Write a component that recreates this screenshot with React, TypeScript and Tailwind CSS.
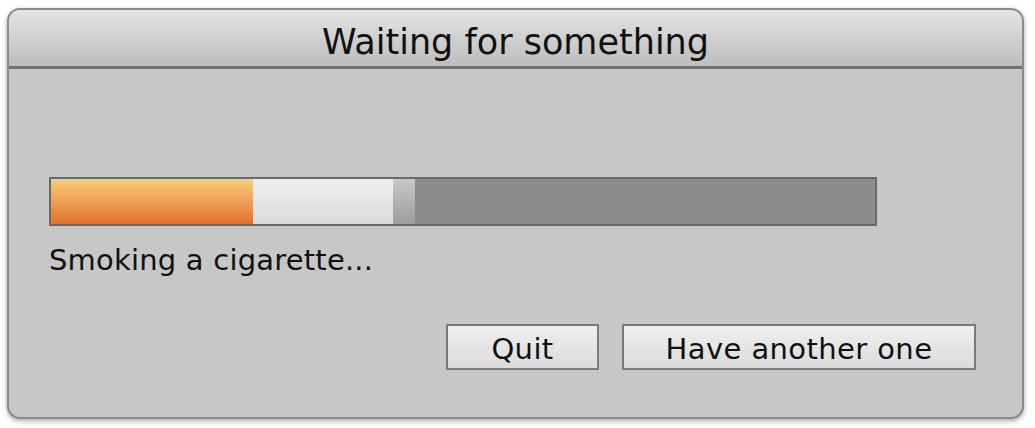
export default function App() {
  const font = { fontFamily: '"DejaVu Sans", Verdana, sans-serif' };

  return (
    <div className="w-[1035px] h-[428px] bg-white pt-[8px] pl-[7px]" style={font}>
      {/* Dialog window */}
      <div className="w-[1017px] h-[411px] rounded-[13px] border-2 border-[#8a8a8a] bg-[#c8c7c8] overflow-hidden shadow-[0_2px_5px_rgba(0,0,0,0.35)] flex flex-col">
        {/* Title bar */}
        <div className="h-[59px] bg-gradient-to-b from-[#e4e4e4] to-[#bdbdbd] border-b-[3px] border-[#707070] flex justify-center pt-[15px]">
          <span className="text-[35px] text-[#111] leading-none">Waiting for something</span>
        </div>

        {/* Body */}
        <div className="flex-1 pl-[40px] pr-[46px] pt-[108px]">
          <div className="w-[828px] h-[49px] border-2 border-[#6a6a6a] flex">
            <div className="w-[202px] bg-gradient-to-b from-[#fdcd74] via-[#eea05a] to-[#e06f28]" />
            <div className="w-[140px] bg-gradient-to-b from-[#f0efee] to-[#dedbdb]" />
            <div className="w-[22px] bg-gradient-to-b from-[#c8c8ca] to-[#9d9d9f]" />
            <div className="flex-1 bg-[#8e8c8e]" />
          </div>
          <div className="mt-[20px] text-[29px] text-[#111] leading-none tracking-[0.2px]">Smoking a cigarette...</div>

          <div className="mt-[49px] flex justify-end gap-[23px]">
            <button className="w-[153px] h-[46px] pt-[4px] border-2 border-[#7a7a7a] bg-gradient-to-b from-[#efefef] to-[#dddbdd] text-[29px] text-[#111] leading-none tracking-[0.4px]">
              Quit
            </button>
            <button className="w-[354px] h-[46px] pt-[4px] border-2 border-[#7a7a7a] bg-gradient-to-b from-[#efefef] to-[#dddbdd] text-[29px] text-[#111] leading-none tracking-[0.4px]">
              Have another one
            </button>
          </div>
        </div>
      </div>
    </div>
  );
}
